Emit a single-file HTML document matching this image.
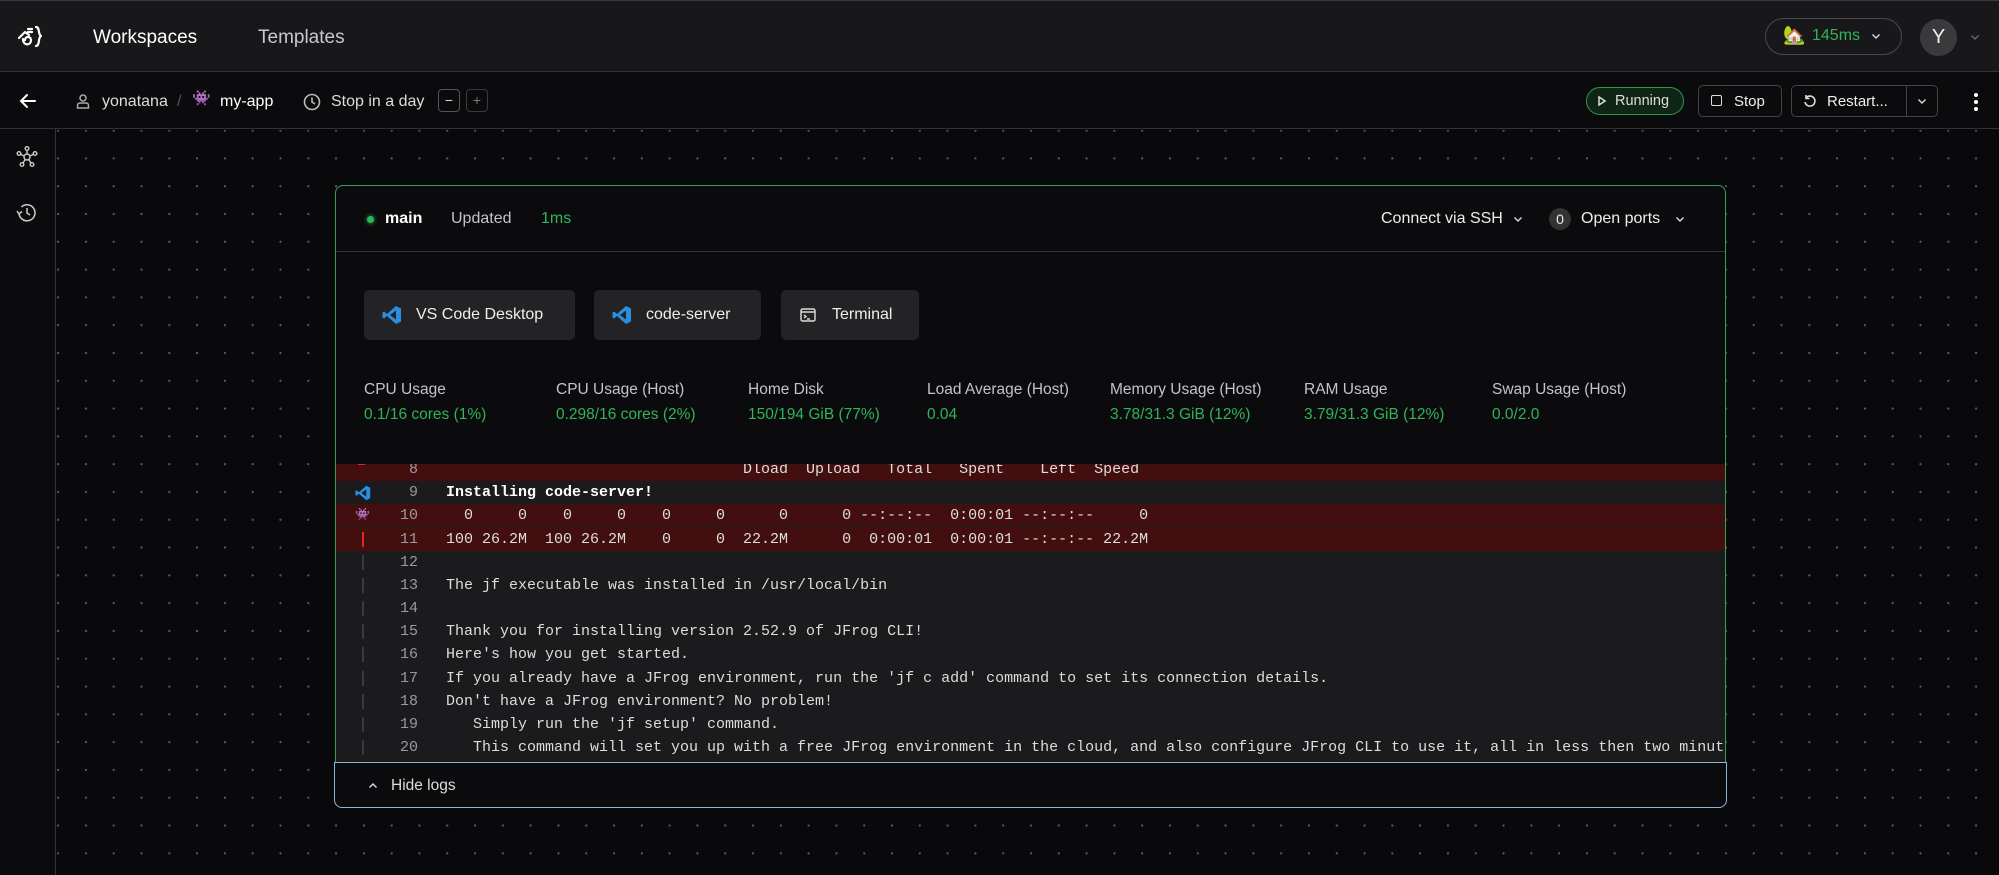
<!DOCTYPE html>
<html><head><meta charset="utf-8"><style>
*{box-sizing:border-box;margin:0;padding:0}
body{width:1999px;height:875px;background:#09090b;font-family:"Liberation Sans",sans-serif;color:#e4e4e7;position:relative;overflow:hidden}
.abs{position:absolute}
.top{left:0;top:0;width:1999px;height:72px;background:#18181a;border-bottom:1px solid #333;border-top:1px solid #3a3a3a}
.bar2{left:0;top:72px;width:1999px;height:57px;background:#0b0b0d;border-bottom:1px solid #333}
.side{left:0;top:129px;width:56px;height:746px;border-right:1px solid #333;background:#0b0b0d}
.dots{left:57px;top:130px;width:1942px;height:745px;background-image:radial-gradient(circle,#5a5a5e 1px,transparent 1.3px);background-size:27.8px 27.8px;background-position:15px 14.5px}
.t{position:absolute;white-space:nowrap;line-height:1}
.card{left:335px;top:185px;width:1391px;height:577px;border:1px solid #38a055;border-bottom:none;border-radius:8px 8px 0 0;background:#0b0b0d;overflow:hidden}
.btn{position:absolute;top:104px;height:50px;background:#232325;border-radius:5px;font-size:16px;color:#eee;display:flex;align-items:center}
.lbl{font-size:15.5px;color:#c4c4c8}
.val{font-size:15.5px;color:#2fb457}
.logs{position:absolute;left:0;top:278px;width:1391px;height:299px;background:#1b1b1d;overflow:hidden}
.row{position:absolute;left:0;width:1391px;height:23.17px;font-family:"Liberation Mono",monospace;font-size:15px;line-height:23.17px;white-space:pre;color:#ddd}
.row.err{background:#430e0e}
.row .n{position:absolute;left:0;width:82px;text-align:right;color:#9a9a9e}
.row .c{position:absolute;left:110px}
.row .g{position:absolute;left:26px;top:4px;width:2px;height:15px;background:#3a3a3e}
.hide{left:334px;top:762px;width:1393px;height:46px;border:1.5px solid #8fb2dc;border-radius:0 0 8px 8px;background:#0b0b0d}
</style></head><body>
<div class="abs top"></div>
<svg class="abs" style="left:17px;top:24px" width="30" height="26" viewBox="0 0 30 26" fill="none" stroke="#fff" stroke-width="2.2" stroke-linecap="round" stroke-linejoin="round"><path d="M2 14 L8 8 L12 11"/><path d="M6 15 C6 22 14 22 14 16 C14 12 8 12 8 16"/><path d="M11 5h4M11 8h4"/><path d="M19 3 C23 3 21 11 24 12 C21 13 23 22 19 22"/></svg>
<div class="t" style="left:93px;top:28px;font-size:19px;color:#fff">Workspaces</div>
<div class="t" style="left:258px;top:28px;font-size:19px;color:#c8c8cc">Templates</div>
<div class="abs" style="left:1765px;top:18px;width:137px;height:37px;border:1px solid #4a4a4e;border-radius:19px"></div>
<div class="t" style="left:1783px;top:26px;font-size:18px">🏡</div>
<div class="t" style="left:1812px;top:28px;font-size:16px;color:#2fb457">145ms</div>
<svg class="abs" style="left:1871px;top:33px" width="10" height="7"><path d="M1.5 1.5l3.5 3.5 3.5-3.5" stroke="#ddd" stroke-width="1.4" fill="none"/></svg>
<div class="abs" style="left:1920px;top:19px;width:37px;height:37px;border-radius:50%;background:#3a3a3d;color:#eee;font-size:20px;text-align:center;line-height:37px">Y</div>
<svg class="abs" style="left:1970px;top:34px" width="10" height="7"><path d="M1.5 1.5l3.5 3.5 3.5-3.5" stroke="#666" stroke-width="1.4" fill="none"/></svg>

<div class="abs bar2"></div>
<svg class="abs" style="left:18px;top:92px" width="20" height="18" fill="none" stroke="#fff" stroke-width="2" stroke-linecap="round"><path d="M17 9H3M9 3L3 9l6 6"/></svg>
<svg class="abs" style="left:76px;top:93px" width="14" height="16" fill="none" stroke="#aaa" stroke-width="1.5"><circle cx="7" cy="5" r="3"/><path d="M1.5 15v-2.5c0-1.5 1-2.5 2.5-2.5h6c1.5 0 2.5 1 2.5 2.5V15z"/></svg>
<div class="t" style="left:102px;top:94px;font-size:16px;color:#ddd">yonatana</div>
<div class="t" style="left:177px;top:94px;font-size:16px;color:#555">/</div>
<div class="t" style="left:192px;top:91px;font-size:15px;color:#3bb34a">👾</div>
<div class="t" style="left:220px;top:94px;font-size:16px;color:#fff">my-app</div>
<svg class="abs" style="left:303px;top:93px" width="18" height="18" fill="none" stroke="#bbb" stroke-width="1.6"><circle cx="9" cy="9" r="7.5"/><path d="M9 4.5V9l3 2"/></svg>
<div class="t" style="left:331px;top:94px;font-size:16px;color:#ddd">Stop in a day</div>
<div class="abs" style="left:438px;top:89px;width:22px;height:23px;border:1px solid #555;border-radius:4px;color:#ddd;text-align:center;line-height:20px;font-size:14px">−</div>
<div class="abs" style="left:466px;top:89px;width:22px;height:23px;border:1px solid #3a3a3a;border-radius:4px;color:#777;text-align:center;line-height:20px;font-size:14px">+</div>
<div class="abs" style="left:1586px;top:87px;width:98px;height:28px;border:1.5px solid #2a9a4b;border-radius:14px;background:#0f2516"></div>
<svg class="abs" style="left:1597px;top:95px" width="10" height="12" fill="none" stroke="#ddd" stroke-width="1.5"><path d="M2 2l6 4-6 4z"/></svg>
<div class="t" style="left:1615px;top:94px;font-size:14.5px;color:#ddd">Running</div>
<div class="abs" style="left:1698px;top:85px;width:84px;height:32px;border:1px solid #444;border-radius:5px"></div>
<div class="abs" style="left:1711px;top:95px;width:11px;height:11px;border:1.5px solid #ddd;border-radius:2px"></div>
<div class="t" style="left:1734px;top:94px;font-size:15px;color:#eee">Stop</div>
<div class="abs" style="left:1791px;top:85px;width:147px;height:32px;border:1px solid #444;border-radius:5px"></div>
<div class="abs" style="left:1906px;top:85px;width:1px;height:32px;background:#444"></div>
<svg class="abs" style="left:1803px;top:94px" width="14" height="14" fill="none" stroke="#ddd" stroke-width="1.6"><path d="M3 4a5 5 0 1 1-1 4"/><path d="M3 1v3.5h3.5"/></svg>
<div class="t" style="left:1827px;top:94px;font-size:15px;color:#eee">Restart...</div>
<svg class="abs" style="left:1917px;top:98px" width="10" height="7"><path d="M1.5 1.5l3.5 3.5 3.5-3.5" stroke="#ddd" stroke-width="1.4" fill="none"/></svg>
<svg class="abs" style="left:1972px;top:91px" width="8" height="22" fill="#fff"><circle cx="4" cy="4" r="2"/><circle cx="4" cy="11" r="2"/><circle cx="4" cy="18" r="2"/></svg>

<div class="abs side"></div>
<svg class="abs" style="left:15px;top:145px" width="24" height="24" fill="none" stroke="#ccc" stroke-width="1.4"><circle cx="12" cy="12" r="3"/><circle cx="12" cy="3.5" r="1.8"/><circle cx="4" cy="8.5" r="1.8"/><circle cx="20" cy="8.5" r="1.8"/><circle cx="7" cy="19.5" r="1.8"/><circle cx="17" cy="19.5" r="1.8"/><path d="M12 5.3V9M5.7 9.4L9.2 11M18.3 9.4L14.8 11M8 18l2.2-3.5M16 18l-2.2-3.5"/></svg>
<svg class="abs" style="left:15px;top:201px" width="24" height="22" fill="none" stroke="#ccc" stroke-width="1.5"><path d="M4 12a8 8 0 1 0 2.5-6"/><path d="M2 10l2 3 3-2.5"/><path d="M12 7v5l3 2"/></svg>
<div class="abs dots"></div>

<div class="abs card">
 <div class="abs" style="left:31px;top:30px;width:7px;height:7px;border-radius:50%;background:#2fb457;box-shadow:0 0 5px #2fb457"></div>
 <div class="t" style="left:49px;top:25px;font-size:16px;font-weight:bold;color:#fff">main</div>
 <div class="t" style="left:115px;top:25px;font-size:16px;color:#c4c4c8">Updated</div>
 <div class="t" style="left:205px;top:25px;font-size:16px;color:#2fb457">1ms</div>
 <div class="t" style="left:1045px;top:25px;font-size:16px;color:#eee">Connect via SSH</div>
 <svg class="abs" style="left:1177px;top:30px" width="10" height="7"><path d="M1.5 1.5l3.5 3.5 3.5-3.5" stroke="#ddd" stroke-width="1.4" fill="none"/></svg>
 <div class="abs" style="left:1213px;top:22px;width:22px;height:22px;border-radius:50%;background:#333;color:#eee;font-size:14px;text-align:center;line-height:22px">0</div>
 <div class="t" style="left:1245px;top:25px;font-size:16px;color:#eee">Open ports</div>
 <svg class="abs" style="left:1339px;top:30px" width="10" height="7"><path d="M1.5 1.5l3.5 3.5 3.5-3.5" stroke="#ddd" stroke-width="1.4" fill="none"/></svg>
 <div class="abs" style="left:0;top:65px;width:1391px;height:1px;background:#333"></div>

 <div class="btn" style="left:28px;width:211px"><svg style="margin:0 14px 0 18px" width="20" height="20" viewBox="0 0 20 20"><path d="M14 1l5 2.5v13L14 19 5 11l-3 2.5-1.5-1V7.5L2 6.5l3 2.5z" fill="#2a8fe0"/><path d="M14 5.5v9L8 10z" fill="#232325"/></svg>VS Code Desktop</div>
 <div class="btn" style="left:258px;width:167px"><svg style="margin:0 14px 0 18px" width="20" height="20" viewBox="0 0 20 20"><path d="M14 1l5 2.5v13L14 19 5 11l-3 2.5-1.5-1V7.5L2 6.5l3 2.5z" fill="#2a8fe0"/><path d="M14 5.5v9L8 10z" fill="#232325"/></svg>code-server</div>
 <div class="btn" style="left:445px;width:138px"><svg style="margin:0 16px 0 19px" width="16" height="14" fill="none" stroke="#ddd" stroke-width="1.4"><rect x="1" y="1" width="14" height="12" rx="1.5"/><path d="M1 4h14M4 7l2 1.5-2 1.5M7 11h3"/></svg>Terminal</div>

 <div class="t lbl" style="left:28px;top:196px">CPU Usage</div>
 <div class="t val" style="left:28px;top:221px">0.1/16 cores (1%)</div>
 <div class="t lbl" style="left:220px;top:196px">CPU Usage (Host)</div>
 <div class="t val" style="left:220px;top:221px">0.298/16 cores (2%)</div>
 <div class="t lbl" style="left:412px;top:196px">Home Disk</div>
 <div class="t val" style="left:412px;top:221px">150/194 GiB (77%)</div>
 <div class="t lbl" style="left:591px;top:196px">Load Average (Host)</div>
 <div class="t val" style="left:591px;top:221px">0.04</div>
 <div class="t lbl" style="left:774px;top:196px">Memory Usage (Host)</div>
 <div class="t val" style="left:774px;top:221px">3.78/31.3 GiB (12%)</div>
 <div class="t lbl" style="left:968px;top:196px">RAM Usage</div>
 <div class="t val" style="left:968px;top:221px">3.79/31.3 GiB (12%)</div>
 <div class="t lbl" style="left:1156px;top:196px">Swap Usage (Host)</div>
 <div class="t val" style="left:1156px;top:221px">0.0/2.0</div>

 <div class="logs">
  <div class="row err" style="top:-6px"><span style="position:absolute;left:22px;top:4px;width:7px;height:3px;background:#e0282a"></span><span class="n">8</span><span class="c">                                 Dload  Upload   Total   Spent    Left  Speed</span></div>
  <div class="row" style="top:17.2px"><svg style="position:absolute;left:19px;top:4px" width="16" height="16" viewBox="0 0 20 20"><path d="M14 1l5 2.5v13L14 19 5 11l-3 2.5-1.5-1V7.5L2 6.5l3 2.5z" fill="#2a8fe0"/><path d="M14 5.5v9L8 10z" fill="#1b1b1d"/></svg><span class="n">9</span><span class="c" style="font-weight:bold;color:#fff">Installing code-server!</span></div>
  <div class="row err" style="top:40.3px"><span style="position:absolute;left:19px;top:0;font-size:12px;color:#3bb34a">👾</span><span class="n">10</span><span class="c">  0     0    0     0    0     0      0      0 --:--:--  0:00:01 --:--:--     0</span></div>
  <div class="row err" style="top:63.5px"><span class="g" style="background:#e0282a"></span><span class="n">11</span><span class="c">100 26.2M  100 26.2M    0     0  22.2M      0  0:00:01  0:00:01 --:--:-- 22.2M</span></div>
  <div class="row" style="top:86.7px"><span class="g"></span><span class="n">12</span></div>
  <div class="row" style="top:109.8px"><span class="g"></span><span class="n">13</span><span class="c">The jf executable was installed in /usr/local/bin</span></div>
  <div class="row" style="top:133px"><span class="g"></span><span class="n">14</span></div>
  <div class="row" style="top:156.2px"><span class="g"></span><span class="n">15</span><span class="c">Thank you for installing version 2.52.9 of JFrog CLI!</span></div>
  <div class="row" style="top:179.4px"><span class="g"></span><span class="n">16</span><span class="c">Here's how you get started.</span></div>
  <div class="row" style="top:202.5px"><span class="g"></span><span class="n">17</span><span class="c">If you already have a JFrog environment, run the 'jf c add' command to set its connection details.</span></div>
  <div class="row" style="top:225.7px"><span class="g"></span><span class="n">18</span><span class="c">Don't have a JFrog environment? No problem!</span></div>
  <div class="row" style="top:248.9px"><span class="g"></span><span class="n">19</span><span class="c">   Simply run the 'jf setup' command.</span></div>
  <div class="row" style="top:272px"><span class="g"></span><span class="n">20</span><span class="c">   This command will set you up with a free JFrog environment in the cloud, and also configure JFrog CLI to use it, all in less then two minutes.</span></div>
 </div>
</div>
<div class="abs hide"></div>
<svg class="abs" style="left:368px;top:782px" width="10" height="7"><path d="M1.5 5.5l3.5-3.5 3.5 3.5" stroke="#ddd" stroke-width="1.4" fill="none"/></svg>
<div class="t" style="left:391px;top:778px;font-size:15.5px;color:#ddd">Hide logs</div>
</body></html>
